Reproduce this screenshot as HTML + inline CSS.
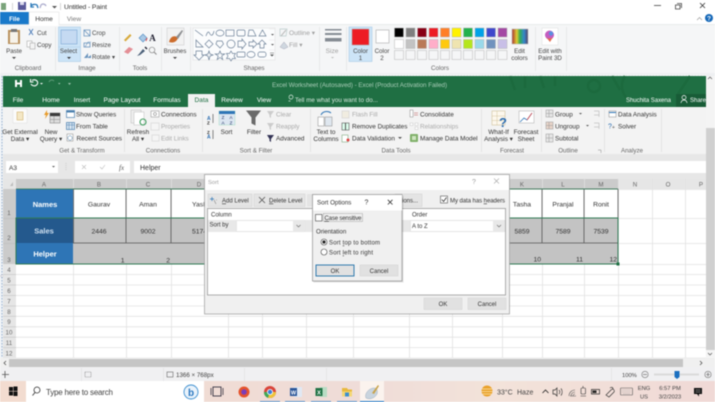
<!DOCTYPE html>
<html><head><meta charset="utf-8"><style>
html,body{margin:0;padding:0;background:#fff;width:715px;height:402px;overflow:hidden}
svg{display:block;position:absolute;left:0;top:0;filter:blur(.4px)}
text{font-family:"Liberation Sans",sans-serif;font-size:6.6px;fill:#333;white-space:pre}
.m{text-anchor:middle}.e{text-anchor:end}.g{fill:#a0a0a0}.l{fill:#777}.w{fill:#fff}.h{font-size:6.2px;fill:#666}
.x{fill:#444;font-size:6.2px}.d{font-size:6.4px;fill:#333}.c{font-size:6.8px;fill:#333}.u{text-decoration:underline}
.t{font-size:6.6px;fill:#fff}
</style></head><body>
<svg width="715" height="402" viewBox="0 0 715 402" xmlns="http://www.w3.org/2000/svg">
<rect width="715" height="402" fill="#fff"/>
<!-- Paint title -->
<rect x="1" y="3" width="5" height="7" fill="#7aa37a"/><rect x="18" y="2" width="8" height="8" fill="#5a5a9a"/><rect x="20" y="2" width="4" height="3" fill="#dde"/>
<path d="M31 6a4 3 0 0 1 6-1l1 3M31 3v4h3" fill="none" stroke="#2a78b8" stroke-width="1.3"/><path d="M46 6a3 3 0 0 0-5-1l-1 3" fill="none" stroke="#aac" stroke-width="1.2"/><path d="M52 6h5l-2.500 2.500z" fill="#555"/>
<path d="M12.500 3v7M60.500 3v7" stroke="#bbb" stroke-width=".6"/>
<text x="64" y="9" textLength="43" style="font-size:6.800px">Untitled - Paint</text>
<path d="M654 5.500h7" stroke="#444" stroke-width=".8"/><path d="M677 3.500h4.500v4.500M675.500 5h4.500v4h-4.500z" fill="none" stroke="#444" stroke-width=".8"/><path d="M700 3l5 5M705 3l-5 5" stroke="#333" stroke-width=".8"/>
<rect x="0" y="12" width="29" height="13" fill="#1979ca"/><text x="14.500" y="21" class="m w" style="font-weight:bold;font-size:6.200px">File</text>
<text x="44" y="21" class="m">Home</text><text x="74" y="21" class="m l">View</text>
<path d="M29 24.500V12h30v12.500" fill="none" stroke="#dcdcdc" stroke-width=".5"/>
<rect x="0" y="24.500" width="715" height="49" fill="#f5f6f7"/><rect x="29.500" y="22" width="29" height="4" fill="#fff"/>
<rect x="0" y="73" width="715" height="3" fill="#eef0f2"/><path d="M0 24.500h29M59 24.500h656" stroke="#dadbdc" stroke-width=".5"/>
<path d="M55.500 27v44M119.500 27v44M161.500 27v44M190.500 27v44M319.500 27v44M346.500 27v44M535.500 27v44M566.500 27v44" stroke="#dfe0e1" stroke-width=".6"/>
<path d="M697 20l2.500-2.500 2.500 2.500" fill="none" stroke="#999" stroke-width=".7"/><circle cx="709" cy="18" r="4" fill="#1668b8"/><text x="709" y="20.500" class="m w" style="font-size:6.500px;font-weight:bold">?</text>
<!-- clipboard -->
<rect x="8" y="30" width="12" height="14" fill="#b9925e"/><rect x="10" y="32" width="8" height="11" fill="#f6f2ea"/><rect x="11" y="29" width="6" height="3" fill="#777"/>
<text x="14" y="53" class="m x">Paste</text><path d="M12 57h4l-2 2z" fill="#444"/>
<path d="M29 29l4 6M33 29l-4 6" stroke="#4a7ab8" stroke-width=".9"/><text x="37" y="35" class="x">Cut</text>
<rect x="27" y="41" width="5" height="6" fill="#fff" stroke="#999" stroke-width=".5"/><rect x="30" y="43" width="5" height="6" fill="#f4f4f4" stroke="#999" stroke-width=".5"/><text x="37" y="47" class="x">Copy</text>
<text x="28" y="70" class="m h">Clipboard</text>
<!-- image -->
<rect x="58.500" y="27" width="22" height="34.500" fill="#cde4f7" stroke="#a9cbe6" stroke-width=".6"/><rect x="61" y="30" width="16" height="14" fill="#c5daf2" stroke="#7aa5d2" stroke-width=".6"/><path d="M58.500 47h22" stroke="#a9cbe6" stroke-width=".5"/>
<text x="68.500" y="53" class="m x">Select</text><path d="M67 57h4l-2 2z" fill="#333"/>
<path d="M84 30h6v6h-6zM84 30l6 6" fill="none" stroke="#6a94bd" stroke-width=".8"/><text x="92" y="35" class="x">Crop</text>
<rect x="84" y="43" width="6" height="4" fill="none" stroke="#6a94bd" stroke-width=".8"/><path d="M85 47l3-5h3" fill="none" stroke="#6a94bd" stroke-width=".6"/><text x="92" y="47" class="x">Resize</text>
<path d="M84 58l4-5v5zM87 58h4v-3z" fill="#6a94bd"/><text x="92" y="59" class="x">Rotate ▾</text>
<text x="87" y="70" class="m h">Image</text>
<!-- tools -->
<path d="M124 40l6-6 1.500 1.500-6 6z" fill="#d7a93a"/><path d="M139 38l4-4 4 4-4 4z" fill="#a9c9e6" stroke="#4b88c0" stroke-width=".6"/><path d="M147 38l-1 3" stroke="#d44" stroke-width="1"/><text x="152.500" y="41" class="m" style="font-size:9px;font-family:'Liberation Serif',serif;font-weight:bold;fill:#223">A</text>
<path d="M124 52l5-5 4 2-5 5z" fill="#e48f96"/><path d="M137 56l2-2 4-5 2 2-5 4z" fill="#4a5f78"/><path d="M145 47l2 2" stroke="#223" stroke-width="1.400"/><circle cx="152" cy="50" r="2.800" fill="none" stroke="#888" stroke-width=".7"/><path d="M154 52l2.500 2.500" stroke="#888"/>
<text x="140" y="70" class="m h">Tools</text>
<!-- brushes -->
<rect x="167" y="28" width="17" height="17" fill="#f2f2f2" stroke="#c7c7c7" stroke-width=".5"/><path d="M169 42c2-8 8-6 9-4-2 5-6 5-9 4z" fill="#cc6c2c"/><path d="M176 37l6-7 1 1-5 8z" fill="#8d8f92"/>
<text x="175" y="53" class="m x">Brushes</text><path d="M173 57h4l-2 2z" fill="#444"/>
<!-- shapes -->
<rect x="193" y="28" width="82" height="32" fill="#fbfcfd" stroke="#dcdcdc" stroke-width=".5"/>
<g fill="none" stroke="#6d8198" stroke-width=".7">
<path d="M195 30l8 6M206 36c2-6 3-4 4-2s3 2 4-3"/><ellipse cx="220" cy="33" rx="4" ry="3"/><rect x="226" y="30" width="8" height="6"/><rect x="237" y="30" width="8" height="6" rx="1.500"/><path d="M248 36l1-6h4l3 6zM259 36l3.500-6 3.500 6z"/>
<path d="M196 47v-7l7 7zM205 44l4-4 4 4-4 4zM216 44l1-3h5l1.500 3-3.500 4zM227 44a4 4 0 1 0 8 0a4 4 0 1 0-8 0zM238 41h4v-2l4 5-4 5v-2h-4zM257 44l-4-4v2h-4v4h4v2zM258 44l4-4 4 4h-2v4h-4v-4z"/>
<path d="M196 51h6v4h2l-5 5-5-5h2zM209 51l1 3 3 1-3 1-1 4-1-4-3-1 3-1zM220 51l1.200 3h3.500l-3 2 1 3.500-2.700-2-2.800 2 1-3.500-3-2h3.500zM231 51l1.500 2.500h3l-1.500 2.500 1.500 2.500h-3l-1.500 2.500-1.500-2.500h-3l1.500-2.500-1.500-2.500h3z"/>
<rect x="237" y="52" width="8" height="5" rx="1"/><ellipse cx="251" cy="54.500" rx="4" ry="3"/><rect x="258" y="52" width="8" height="5" rx="2"/></g>
<path d="M269 29h6M269 40h6M269 50h6" stroke="#e5e5e5" stroke-width=".5"/><path d="M271 34h3l-1.500 1.500zM271 44h3l-1.500 1.500zM270 54.500h4l-2 2z" fill="#555"/><path d="M270 53h4" stroke="#555" stroke-width=".5"/>
<path d="M280 29h7l-1 7h-6z" fill="none" stroke="#bcc" stroke-width=".7"/><path d="M281 36l5-6" stroke="#bbb"/><text x="289" y="35" class="g">Outline ▾</text>
<path d="M280 47l4-5 4 5-4 2z" fill="#cfd7df" stroke="#aab" stroke-width=".5"/><text x="289" y="47" class="g">Fill ▾</text>
<text x="254" y="70" class="m h">Shapes</text>
<!-- size -->
<rect x="325" y="29" width="16.500" height="1.500" fill="#858b93"/><rect x="325" y="33" width="16.500" height="2" fill="#858b93"/><rect x="325" y="38" width="16.500" height="3.500" fill="#858b93"/>
<text x="332" y="53" class="m g">Size</text><path d="M331 57h3l-1.500 1.500z" fill="#bbb"/>
<!-- colors -->
<rect x="349" y="27" width="23" height="34.500" fill="#cde4f7" stroke="#a9cbe6" stroke-width=".6"/><rect x="352" y="29" width="17" height="16" fill="#ed1c24" stroke="#aaa" stroke-width=".5"/>
<text x="360.500" y="53" class="m x">Color</text><text x="360.500" y="60" class="m x">1</text>
<rect x="376" y="30" width="13" height="13" fill="#fff" stroke="#aaa" stroke-width=".6"/><text x="382" y="53" class="m x">Color</text><text x="382" y="60" class="m x">2</text>
<g stroke="#b6b6b6" stroke-width=".5">
<rect x="394.500" y="28" width="9" height="9" fill="#000"/><rect x="406" y="28" width="9" height="9" fill="#7f7f7f"/><rect x="417.500" y="28" width="9" height="9" fill="#880015"/><rect x="429" y="28" width="9" height="9" fill="#ed1c24"/><rect x="440.500" y="28" width="9" height="9" fill="#ff7f27"/><rect x="452" y="28" width="9" height="9" fill="#fff200"/><rect x="463.500" y="28" width="9" height="9" fill="#22b14c"/><rect x="475" y="28" width="9" height="9" fill="#00a2e8"/><rect x="486.500" y="28" width="9" height="9" fill="#3f48cc"/><rect x="498" y="28" width="9" height="9" fill="#a349a4"/>
<rect x="394.500" y="39.500" width="9" height="9" fill="#fff"/><rect x="406" y="39.500" width="9" height="9" fill="#c3c3c3"/><rect x="417.500" y="39.500" width="9" height="9" fill="#b97a57"/><rect x="429" y="39.500" width="9" height="9" fill="#ffaec9"/><rect x="440.500" y="39.500" width="9" height="9" fill="#ffc90e"/><rect x="452" y="39.500" width="9" height="9" fill="#efe4b0"/><rect x="463.500" y="39.500" width="9" height="9" fill="#b5e61d"/><rect x="475" y="39.500" width="9" height="9" fill="#99d9ea"/><rect x="486.500" y="39.500" width="9" height="9" fill="#7092be"/><rect x="498" y="39.500" width="9" height="9" fill="#c8bfe7"/>
<g fill="#f5f6f7"><rect x="394.500" y="50.500" width="9" height="9"/><rect x="406" y="50.500" width="9" height="9"/><rect x="417.500" y="50.500" width="9" height="9"/><rect x="429" y="50.500" width="9" height="9"/><rect x="440.500" y="50.500" width="9" height="9"/><rect x="452" y="50.500" width="9" height="9"/><rect x="463.500" y="50.500" width="9" height="9"/><rect x="475" y="50.500" width="9" height="9"/><rect x="486.500" y="50.500" width="9" height="9"/><rect x="498" y="50.500" width="9" height="9"/></g></g>
<defs><linearGradient id="rb" x1="0" x2="1" y1="0" y2="0"><stop offset="0" stop-color="#a33"/><stop offset=".3" stop-color="#dc3"/><stop offset=".5" stop-color="#3a5"/><stop offset=".75" stop-color="#38c"/><stop offset="1" stop-color="#546"/></linearGradient></defs>
<rect x="512" y="29" width="16" height="15" fill="url(#rb)" stroke="#bbb" stroke-width=".6"/>
<text x="519.500" y="53" class="m x">Edit</text><text x="519.500" y="60" class="m x">colors</text>
<text x="440" y="70" class="m h">Colors</text>
<rect x="542" y="28" width="16" height="17" fill="#fff" stroke="#ddd" stroke-width=".5"/><circle cx="549.500" cy="35" r="4.500" fill="#c45cc0"/><path d="M546 37c2 2 5 2 7 0l-3 5z" fill="#e36a4e"/><circle cx="551" cy="33.500" r="2.200" fill="#5a8ee0"/>
<text x="550" y="53" class="m x">Edit with</text><text x="550" y="60" class="m x">Paint 3D</text>
<!-- canvas bg -->
<rect x="0" y="76" width="3" height="291" fill="#edf1f6"/><path d="M2 76v282" stroke="#7a9bc0" stroke-width=".7" stroke-dasharray="1.500 1.500"/>
<circle cx="2" cy="276" r="1.200" fill="#fff" stroke="#889" stroke-width=".4"/>
<!-- Excel title -->
<rect x="3" y="76" width="703" height="31" fill="#1f6f43"/>
<path d="M3 75.500h703" stroke="#fff" stroke-width="1" stroke-dasharray="1.500 1.500"/>
<g fill="none" stroke="#1c6a3e" stroke-width="2.500"><circle cx="594" cy="86" r="6"/><path d="M510 76l5 14M525 76v12M540 76l4 12M555 76v10M612 76l8 14M625 76a18 18 0 0 0 30 20M690 76l-12 18"/></g>
<rect x="15" y="80" width="7" height="7" fill="#fff"/><rect x="17" y="80" width="3" height="2.500" fill="#1f6f43"/><rect x="17" y="84.500" width="3" height="2.500" fill="#1f6f43"/>
<path d="M31 84a3.500 3 0 1 0 1-3.500M30.500 79v3h3" fill="none" stroke="#fff" stroke-width="1.100"/><path d="M40 83h3l-1.500 1.500z" fill="#fff"/><path d="M49 82a3 3 0 0 1 5-1" fill="none" stroke="#5d9b78"/><path d="M58 83h2.500l-1.200 1.500zM68 83h3l-1.500 2z" fill="#9dc5ae"/>
<text x="272" y="87" textLength="175" style="font-size:6.200px;fill:#a9cdb8">Excel Worksheet (Autosaved) - Excel (Product Activation Failed)</text>
<rect x="188" y="94" width="27" height="13" fill="#f2f2f2"/>
<text x="18" y="102" class="m t">File</text><text x="51" y="102" class="m t">Home</text><text x="82" y="102" class="m t">Insert</text><text x="122" y="102" class="m t">Page Layout</text><text x="167" y="102" class="m t">Formulas</text><text x="201.500" y="102" class="m" style="font-size:6.600px;fill:#1f6f43">Data</text><text x="232" y="102" class="m t">Review</text><text x="264" y="102" class="m t">View</text>
<path d="M289 97a2 2 0 1 1 0 .1M288.500 101h2" fill="none" stroke="#d8e8de" stroke-width=".7"/><text x="295" y="102" textLength="83" style="font-size:6.200px;fill:#d8e8de">Tell me what you want to do...</text>
<text x="626" y="102" textLength="45" class="w" style="font-size:6px">Shuchita Saxena</text>
<rect x="676" y="94" width="30" height="13" fill="#185c37"/><circle cx="684" cy="97.500" r="2" fill="none" stroke="#fff" stroke-width=".7"/><path d="M681 103a3 3 0 0 1 6 0" fill="none" stroke="#fff" stroke-width=".7"/><text x="690" y="102" class="w" style="font-size:6px">Share</text>
<!-- Excel ribbon -->
<rect x="3" y="107" width="703" height="48" fill="#f3f3f3"/>
<rect x="3" y="154" width="703" height="25" fill="#e7e7e7"/>
<path d="M124.500 109v43M202.500 109v43M310.500 109v43M481.500 109v43M541.500 109v43M604.500 109v43M661.500 109v43" stroke="#dcdcdc" stroke-width=".7"/>
<rect x="13" y="109" width="14" height="14" fill="#fbfbfb" stroke="#ddd" stroke-width=".5"/><rect x="17" y="112" width="6" height="8" fill="#f4e7c5" stroke="#cba95c" stroke-width=".5"/>
<text x="20" y="134" class="m d">Get External</text><text x="20" y="141" class="m d">Data ▾</text>
<path d="M47 110l-3 5h2l-1 4 4-6h-2z" fill="#e79b2a"/><rect x="50" y="113" width="10" height="10" fill="#ddd" stroke="#777" stroke-width=".5"/><path d="M50 116h10M50 119.500h10M54 113v10" stroke="#888" stroke-width=".5"/><rect x="50" y="113" width="10" height="3" fill="#3b3b3b"/>
<text x="51" y="134" class="m d">New</text><text x="51" y="141" class="m d">Query ▾</text>
<rect x="66.500" y="110.500" width="8" height="7" fill="#fff" stroke="#4a7fae" stroke-width=".7"/><rect x="66.500" y="110.500" width="8" height="2" fill="#4a7fae"/><text x="76" y="116.500" class="d">Show Queries</text>
<rect x="66.500" y="122.500" width="8" height="7" fill="#dbe7f2" stroke="#4a7fae" stroke-width=".7"/><path d="M66.500 125h8M69 122.500v7M72 122.500v7" stroke="#4a7fae" stroke-width=".5"/><text x="76" y="128.500" class="d">From Table</text>
<rect x="67" y="134" width="6" height="7" fill="#fff" stroke="#888" stroke-width=".5"/><circle cx="70" cy="138" r="2.200" fill="#fff" stroke="#4a7fae" stroke-width=".5"/><text x="76.500" y="140.500" class="d">Recent Sources</text>
<text x="82" y="152.500" class="m h">Get &amp; Transform</text>
<rect x="131" y="110" width="10" height="13" fill="#eee" stroke="#bbb" stroke-width=".5"/><rect x="134" y="112" width="10" height="13" fill="#fff" stroke="#bbb" stroke-width=".5"/><circle cx="143" cy="122" r="3" fill="none" stroke="#3d9c5c" stroke-width="1.100"/>
<text x="138" y="134" class="m d">Refresh</text><text x="138" y="141" class="m d">All ▾</text>
<rect x="151" y="111" width="8" height="6" fill="#fff" stroke="#888" stroke-width=".5"/><circle cx="155" cy="114" r="1.500" fill="none" stroke="#666" stroke-width=".5"/><text x="161" y="116.500" class="d">Connections</text>
<rect x="151" y="123" width="8" height="7" fill="#f5f5f5" stroke="#ccc" stroke-width=".5"/><text x="161" y="128.500" class="d" style="fill:#aaa">Properties</text>
<rect x="152" y="135" width="7" height="6" fill="#f5f5f5" stroke="#ccc" stroke-width=".5"/><text x="161" y="140.500" class="d" style="fill:#aaa">Edit Links</text>
<text x="163" y="152.500" class="m h">Connections</text>
<text x="207" y="120" style="font-size:5px;fill:#2b6cb0;font-weight:bold">A</text><text x="207" y="124.500" style="font-size:4.500px;fill:#333;font-weight:bold">Z</text><path d="M213 114v9" stroke="#555" stroke-width=".7"/>
<text x="207" y="134" style="font-size:4.500px;fill:#333;font-weight:bold">Z</text><text x="207" y="138.500" style="font-size:5px;fill:#2b6cb0;font-weight:bold">A</text><path d="M213 130v9" stroke="#555" stroke-width=".7"/>
<rect x="219" y="111" width="16" height="14" fill="#dce6f1" stroke="#9db" stroke-width=".4"/><rect x="219" y="111" width="16" height="3" fill="#2e75b6"/><text x="223" y="119" class="m" style="font-size:4.500px;fill:#236">Z</text><text x="231" y="119" class="m" style="font-size:4.500px;fill:#236">A</text><text x="223" y="124.500" class="m" style="font-size:4.500px;fill:#236">A</text><text x="231" y="124.500" class="m" style="font-size:4.500px;fill:#236">Z</text>
<text x="226.500" y="134" class="m d">Sort</text>
<path d="M246 110.500h15l-5.500 7v8l-4-2v-6z" fill="#6a6a6a"/><text x="254" y="134" class="m d">Filter</text>
<path d="M267 111h7l-3 4v3l-1.500-1v-2z" fill="#ccc"/><text x="276" y="116.500" class="d" style="fill:#aaa">Clear</text>
<path d="M267 123h7l-3 4v3l-1.500-1v-2z" fill="#ccc"/><text x="276" y="128.500" class="d" style="fill:#aaa">Reapply</text>
<path d="M267 135h7l-3 4v3l-1.500-1v-2z" fill="#335"/><text x="276" y="140.500" class="d">Advanced</text>
<text x="256" y="152.500" class="m h">Sort &amp; Filter</text>
<rect x="318" y="117" width="6" height="9" fill="#fff" stroke="#888" stroke-width=".5"/><rect x="325" y="117" width="7" height="9" fill="#dfe7ef" stroke="#888" stroke-width=".5"/><path d="M321 115a6 5 0 0 1 10-2" fill="none" stroke="#2e75b6" stroke-width="1"/>
<text x="326" y="134" class="m d">Text to</text><text x="326" y="141" class="m d">Columns</text>
<rect x="342" y="111" width="7" height="7" fill="#f1ece0" stroke="#ccc" stroke-width=".5"/><text x="352" y="116.500" class="d" style="fill:#aaa">Flash Fill</text>
<rect x="342" y="123" width="7" height="7" fill="#dfe" stroke="#555" stroke-width=".6"/><path d="M345.500 123v7" stroke="#555"/><text x="352" y="128.500" class="d">Remove Duplicates</text>
<rect x="342" y="135" width="6" height="7" fill="#fff" stroke="#6a9a6a" stroke-width=".5"/><circle cx="348" cy="140" r="1.500" fill="#d44"/><text x="352" y="140.500" class="d">Data Validation</text><path d="M398 137h4l-2 2z" fill="#555"/>
<rect x="410" y="110" width="3" height="7" fill="#fff" stroke="#888" stroke-width=".5"/><path d="M414 113h4M414 115h4" stroke="#b55" stroke-width=".6"/><text x="420" y="116.500" class="d">Consolidate</text>
<rect x="410" y="123" width="3" height="2.500" fill="#fff" stroke="#bbb" stroke-width=".4"/><rect x="415" y="123" width="3" height="2.500" fill="#fff" stroke="#bbb" stroke-width=".4"/><rect x="415" y="127" width="3" height="2.500" fill="#fff" stroke="#bbb" stroke-width=".4"/><text x="420" y="128.500" class="d" style="fill:#aaa">Relationships</text>
<rect x="410" y="134" width="8" height="8" rx="1" fill="#7fb069"/><rect x="412" y="136" width="4" height="4" fill="#cfe4c1"/><text x="420" y="140.500" class="d">Manage Data Model</text>
<text x="396" y="152.500" class="m h">Data Tools</text>
<rect x="492" y="111" width="13" height="14" fill="#fdf8ee" stroke="#c9b98c" stroke-width=".5"/><path d="M492 116h13M492 120.500h13M497 111v14" stroke="#c9b98c" stroke-width=".4"/><text x="503" y="127" class="m" style="font-size:13px;font-weight:bold;fill:#2b6cb0">?</text>
<text x="498.500" y="134" class="m d">What-If</text><text x="498.500" y="141" class="m d">Analysis ▾</text>
<rect x="519" y="111" width="15" height="12" fill="#fff" stroke="#aaa" stroke-width=".5"/><path d="M520 122l4-4 3 2 5-7" fill="none" stroke="#2e75b6" stroke-width=".8"/><path d="M527 120l5-7" fill="none" stroke="#d44" stroke-width=".7"/>
<text x="526" y="134" class="m d">Forecast</text><text x="526" y="141" class="m d">Sheet</text>
<text x="512" y="152.500" class="m h">Forecast</text>
<rect x="546" y="110" width="7" height="7" fill="#e6e6e6" stroke="#999" stroke-width=".5"/><path d="M549 110v7M546 113.500h7" stroke="#999" stroke-width=".5"/><text x="555" y="116.500" class="d">Group</text><path d="M579 113h3l-1.500 1.500z" fill="#555"/>
<rect x="546" y="122" width="7" height="7" fill="#e7d3c8" stroke="#999" stroke-width=".5"/><path d="M549 122v7M546 125.500h7" stroke="#999" stroke-width=".5"/><text x="555" y="128.500" class="d">Ungroup</text><path d="M586 125h3l-1.500 1.500z" fill="#555"/>
<rect x="546" y="134" width="7" height="8" fill="#e6e6e6" stroke="#999" stroke-width=".5"/><path d="M549 134v8M546 138h7" stroke="#999" stroke-width=".5"/><text x="555" y="140.500" class="d">Subtotal</text>
<path d="M594 111h5M599 111v6M594 115h5" fill="none" stroke="#aaa" stroke-width=".5"/><path d="M594 123h5M599 123v6M594 127h5" fill="none" stroke="#aaa" stroke-width=".5"/>
<text x="568" y="152.500" class="m h">Outline</text><path d="M598 150h3v3" fill="none" stroke="#888" stroke-width=".5"/>
<rect x="609" y="111" width="7" height="6" fill="#fff" stroke="#888" stroke-width=".5"/><path d="M609 112.500h7" stroke="#2e75b6" stroke-width="1"/><text x="618" y="116.500" class="d">Data Analysis</text>
<text x="608" y="128.500" style="font-size:7px;fill:#2b6cb0">?</text><text x="612" y="129" style="font-size:5px;fill:#555">+</text><text x="618" y="128.500" class="d">Solver</text>
<text x="632" y="152.500" class="m h">Analyze</text>
<!-- formula bar -->
<rect x="6" y="161" width="52" height="12" fill="#fff"/><text x="9" y="170" class="d" style="font-size:6.500px">A3</text><path d="M52 166h3l-1.500 1.500z" fill="#555"/>
<path d="M66 163v8" stroke="#ccc" stroke-width="1" stroke-dasharray="1 1"/>
<rect x="75" y="161" width="55" height="12" fill="#fff"/><path d="M82 165l4 4M86 165l-4 4" stroke="#bbb" stroke-width=".6"/><path d="M100 167l2 2 3-4" fill="none" stroke="#bbb" stroke-width=".6"/><text x="119" y="170" style="font-family:'Liberation Serif',serif;font-style:italic;font-size:7px;fill:#555">fx</text>
<rect x="134" y="161" width="572" height="12" fill="#fff"/><text x="140" y="170" style="font-size:7px;fill:#333">Helper</text>
<!-- sheet -->
<rect x="3" y="179" width="703" height="179" fill="#fff"/>
<rect x="3" y="179" width="13" height="179" fill="#e6e6e6"/><rect x="3" y="179" width="703" height="10" fill="#e6e6e6"/>
<path d="M13 186v-4l-3 4z" fill="#bbb"/>
<rect x="16" y="179" width="602" height="10" fill="#cbcbcb"/><rect x="3" y="189" width="13" height="75" fill="#cbcbcb"/>
<path d="M73.500 179v179M126.500 179v179M171.500 179v179M228.500 179v179M262.500 179v179M306.500 179v179M353.500 179v179M409.500 179v179M452.500 179v179M502.500 179v179M542.500 179v179M584.500 179v179M618.500 179v179M652.500 179v179M685.500 179v179" stroke="#e2e2e2" stroke-width=".8"/>
<path d="M16 274.500h690M16 285h690M16 295.500h690M16 306h690M16 316.300h690M16 326.800h690M16 337.200h690M16 347.600h690M16 358h690M618 218.500h88M618 243.500h88M618 189.500h88M618 264.500h88" stroke="#e2e2e2" stroke-width=".8"/>
<path d="M3 274.500h13M3 285h13M3 295.500h13M3 306h13M3 316.300h13M3 326.800h13M3 337.200h13M3 347.600h13M3 218.500h13M3 243.500h13" stroke="#bbb" stroke-width=".5"/>
<!-- table -->
<rect x="16" y="189" width="57" height="29" fill="#2e75b6"/><rect x="16" y="218" width="57" height="25" fill="#24598d"/><rect x="16" y="243" width="57" height="21" fill="#2e75b6"/>
<rect x="73" y="218" width="545" height="46" fill="#c3c3c3"/>
<g stroke="#555" stroke-width=".8"><path d="M73 189h545M73 218h545M73 243h545"/><path d="M73.500 189v54M126 189v54M171 189v54M228 189v54M262 189v54M306 189v54M353 189v54M409 189v54M452 189v54M502 189v54M542 189v54M584 189v54M618 189v54"/></g>
<rect x="16" y="218" width="602" height="46" fill="none" stroke="#2f7a55" stroke-width="1"/><path d="M16 189h602" stroke="#2f7a55" stroke-width=".8"/><rect x="616.500" y="262.500" width="3" height="3" fill="#1f6f43"/>
<text x="45" y="207" class="m w" style="font-size:7.500px;font-weight:bold">Names</text><text x="44" y="233.500" class="m" style="font-size:7.500px;font-weight:bold;fill:#cfe0f0">Sales</text><text x="45" y="256.500" class="m w" style="font-size:7.500px;font-weight:bold">Helper</text>
<text x="99" y="206.500" class="m c">Gaurav</text><text x="148" y="206.500" class="m c">Aman</text><text x="192" y="206.500" class="c">Yash</text>
<text x="99" y="233.500" class="m c">2446</text><text x="148" y="233.500" class="m c">9002</text><text x="192" y="233.500" class="c">5174</text>
<text x="124.500" y="262.500" class="e c">1</text><text x="170" y="262.500" class="e c">2</text>
<text x="522" y="206.500" class="m c">Tasha</text><text x="563" y="206.500" class="m c">Pranjal</text><text x="601" y="206.500" class="m c">Ronit</text>
<text x="522" y="233.500" class="m c">5859</text><text x="563" y="233.500" class="m c">7589</text><text x="601" y="233.500" class="m c">7539</text>
<text x="541" y="261.500" class="e c">10</text><text x="583" y="261.500" class="e c">11</text><text x="617" y="261.500" class="e c">12</text>
<!-- headers -->
<text x="44" y="186.500" class="m h">A</text><text x="99" y="186.500" class="m h">B</text><text x="148" y="186.500" class="m h">C</text><text x="199" y="186.500" class="m h">D</text><text x="522" y="186.500" class="m h">K</text><text x="563" y="186.500" class="m h">L</text><text x="601" y="186.500" class="m h">M</text><text x="635" y="186.500" class="m h">N</text><text x="668" y="186.500" class="m h">O</text><text x="701" y="186.500" class="m h">P</text>
<text x="9" y="215" class="m h">1</text><text x="9" y="240" class="m h">2</text><text x="9" y="262" class="m h">3</text><text x="9" y="272" class="m h">4</text><text x="9" y="282.500" class="m h">5</text><text x="9" y="293" class="m h">6</text><text x="9" y="303.500" class="m h">7</text><text x="9" y="314" class="m h">8</text><text x="9" y="324" class="m h">9</text><text x="9" y="334.500" class="m h">10</text><text x="9" y="345" class="m h">11</text><text x="9" y="355.500" class="m h">12</text>
<!-- scrollbars -->
<rect x="706" y="76" width="9" height="291" fill="#f4f4f4"/><rect x="706" y="128" width="9" height="222" fill="#d0d0d0"/>
<path d="M708 79l2-2 2 2M708 353l2 2 2-2" fill="none" stroke="#555" stroke-width=".7"/>
<rect x="0" y="358" width="715" height="9" fill="#f0f0f0"/><rect x="9" y="359" width="674" height="8" fill="#c5c5c5"/>
<path d="M6 361l-2 2 2 2M700 361l2 2-2 2" fill="none" stroke="#444" stroke-width=".7"/>
<!-- status -->
<rect x="0" y="367" width="715" height="14" fill="#f0f0f2"/>
<path d="M81.500 368v13M163.500 368v13M244.500 368v13M326.500 368v13M611.500 368v13" stroke="#dedede" stroke-width=".6"/>
<path d="M5 371v7M2 374.500h7" stroke="#555" stroke-width=".8"/>
<rect x="85" y="372" width="6" height="5" fill="none" stroke="#777" stroke-width=".6" stroke-dasharray="1 .6"/><rect x="167" y="372" width="6" height="5" fill="none" stroke="#666" stroke-width=".6"/>
<text x="176" y="377" class="x">1366 × 768px</text>
<text x="622" y="377" class="x" style="font-size:5.800px">100%</text>
<circle cx="645" cy="374.500" r="3.200" fill="none" stroke="#777" stroke-width=".6"/><path d="M643 374.500h4" stroke="#555" stroke-width=".6"/>
<rect x="654" y="373.500" width="45" height="2" fill="#dadada"/><path d="M674.500 371h5v6l-2.500 2-2.500-2z" fill="#1a6fc0"/>
<circle cx="708" cy="374.500" r="3.200" fill="none" stroke="#777" stroke-width=".6"/><path d="M706 374.500h4M708 372.500v4" stroke="#555" stroke-width=".6"/>
<!-- taskbar -->
<defs><linearGradient id="tb" x1="0" x2="1" y1="0" y2="0"><stop offset="0" stop-color="#f3dcd0"/><stop offset=".5" stop-color="#efdcd8"/><stop offset=".7" stop-color="#f3e3da"/><stop offset="1" stop-color="#f0d9d6"/></linearGradient></defs>
<rect x="0" y="381" width="715" height="21" fill="url(#tb)"/>
<g fill="#111"><rect x="9" y="387" width="4" height="4"/><rect x="13.500" y="386.500" width="4" height="4.500"/><rect x="9" y="391.500" width="4" height="4"/><rect x="13.500" y="391.500" width="4" height="4.500"/></g>
<rect x="26" y="381" width="178" height="21" fill="#fff"/>
<circle cx="37" cy="390" r="3" fill="none" stroke="#333" stroke-width=".8"/><path d="M35 392.500l-2.500 3" stroke="#333" stroke-width=".9"/>
<text x="46" y="395" textLength="67" style="font-size:8px;fill:#444">Type here to search</text>
<circle cx="191" cy="392" r="7" fill="#eaf3fb" stroke="#3e8fd0" stroke-width=".9"/><text x="191" y="396" class="m" style="font-size:10px;font-weight:bold;fill:#2b78c0">b</text>
<rect x="213" y="387" width="8" height="9" fill="none" stroke="#223" stroke-width=".8"/><path d="M211 388v7M223 388v7" stroke="#223" stroke-width=".7"/>
<circle cx="244" cy="392" r="5.500" fill="#e5532c"/><circle cx="244" cy="392" r="2.800" fill="#7b3db8"/>
<circle cx="270" cy="392" r="6" fill="#d9443a"/><path d="M270 392l-6 0a6 6 0 0 0 4 6z" fill="#3fa856"/><path d="M270 392l6 0a6 6 0 0 1-6 6l-2-.3z" fill="#eec43a"/><circle cx="270" cy="392" r="2.600" fill="#3a7fd8" stroke="#fff" stroke-width=".8"/>
<rect x="294" y="387" width="8" height="10" fill="#e0e8f4"/><rect x="290" y="388" width="7" height="8" fill="#2b579a"/><text x="293.500" y="394.500" class="m w" style="font-size:5.500px;font-weight:bold">W</text>
<rect x="320" y="387" width="7" height="10" fill="#b8dcc4"/><rect x="315.500" y="388" width="7" height="8" fill="#217346"/><text x="319" y="394.500" class="m w" style="font-size:5.500px;font-weight:bold">X</text>
<path d="M342 388h5l1 1.500h4v2h-10z" fill="#e8b93d"/><rect x="342" y="391.500" width="10" height="5" fill="#f4d774"/><rect x="345" y="392.500" width="4" height="4" fill="#3c8fcf"/>
<rect x="360" y="381" width="24" height="21" fill="#fbf3ee"/><path d="M366 398c-2-4 3-10 8-10 3 0 4 3 3 6-2 4-7 6-11 4z" fill="#c9d4de" stroke="#8fa3b8" stroke-width=".4"/><path d="M372 393l6-8 1 1-5 8z" fill="#c9a34a"/>
<g fill="#1f78c8" opacity=".7"><rect x="260" y="401" width="20" height="1"/><rect x="285" y="401" width="20" height="1"/><rect x="311" y="401" width="20" height="1"/><rect x="337" y="401" width="20" height="1"/></g><rect x="360" y="401" width="24" height="1" fill="#1f78c8"/>
<circle cx="487" cy="391" r="5.500" fill="#e9a12b"/><path d="M482 389h10M481.500 391.500h11M482.500 394h9" stroke="#fbe3ad" stroke-width=".7"/>
<text x="497" y="394.500" class="x" style="font-size:7px">33°C</text><text x="517" y="394.500" class="x" style="font-size:7px">Haze</text>
<path d="M542.500 393l3-3 3 3" fill="none" stroke="#222" stroke-width=".8"/>
<path d="M553 390h2l2-2v8l-2-2h-2zM559 390a3 3 0 0 1 0 4M561 388.500a6 6 0 0 1 0 7" fill="none" stroke="#333" stroke-width=".7"/>
<path d="M569 396a6 6 0 0 1 6-6M571 396a4 4 0 0 1 4-4M573 396a2 2 0 0 1 2-2M570 396h6" fill="none" stroke="#555" stroke-width=".6"/>
<rect x="581" y="388" width="4.500" height="6" rx="1" fill="none" stroke="#333" stroke-width=".6"/><path d="M580.500 396h5.500M583 386v2" stroke="#333" stroke-width=".6"/>
<rect x="591.500" y="389.500" width="8" height="4.500" fill="none" stroke="#222" stroke-width=".7"/><rect x="592.500" y="390.500" width="4" height="2.500" fill="#222"/>
<path d="M606 395l5-5a1.500 1.500 0 0 1 3 2l-5 5zM610 388c1-1 3-1 3 1" fill="none" stroke="#333" stroke-width=".7"/>
<rect x="620.500" y="388" width="12" height="7" rx=".5" fill="none" stroke="#555" stroke-width=".6"/><path d="M622 390h9M622 392h9M623 393.800h7" stroke="#999" stroke-width=".5" stroke-dasharray="1 .5"/>
<text x="644" y="390" class="m x" style="font-size:5.800px">ENG</text><text x="644" y="398.500" class="m x" style="font-size:5.800px">US</text>
<text x="670" y="390" class="m x" style="font-size:5.800px">6:57 PM</text><text x="670" y="398.500" class="m x" style="font-size:5.800px">3/2/2023</text>
<path d="M694 388h8v6h-3v2.500l-2-2.500h-3z" fill="#111"/><path d="M695.500 390h5M695.500 392h5" stroke="#fff" stroke-width=".4"/>
<!-- Sort dialog -->
<rect x="204.500" y="174.500" width="305" height="139.500" fill="#f0f0f0" stroke="#9b9b9b" stroke-width=".7"/>
<rect x="205" y="175" width="304" height="15" fill="#fff"/>
<text x="208" y="184" class="g" style="font-size:5.800px">Sort</text><text x="474" y="184" class="m g" style="font-size:7px">?</text><path d="M494 178.500l5 5M499 178.500l-5 5" stroke="#aaa" stroke-width=".7"/>
<rect x="208" y="194" width="44" height="12.500" fill="#e4e4e4" stroke="#d0d0d0" stroke-width=".5"/><path d="M212 197v4M210 199h4" stroke="#2e75b6" stroke-width=".7"/><path d="M214 200l2 4M216 200h1" stroke="#888" stroke-width=".6"/><text x="222" y="202.500" class="d" style="font-size:6px"><tspan class="u">A</tspan>dd Level</text>
<rect x="254" y="194" width="51" height="12.500" fill="#e4e4e4" stroke="#d0d0d0" stroke-width=".5"/><path d="M259 197l6 6M265 197l-6 6" stroke="#555" stroke-width=".8"/><text x="269" y="202.500" class="d" style="font-size:6px"><tspan class="u">D</tspan>elete Level</text>
<rect x="307" y="194" width="10" height="12.500" fill="#e4e4e4"/><rect x="395" y="194" width="27" height="12.500" fill="#e4e4e4" stroke="#d0d0d0" stroke-width=".5"/><text x="402" y="202.500" class="d" style="font-size:6px">ions...</text>
<rect x="440.500" y="196" width="7" height="7" fill="#fff" stroke="#555" stroke-width=".6"/><path d="M441.800 199.500l1.800 2 2.800-4" fill="none" stroke="#333" stroke-width=".8"/><text x="450" y="202.500" class="d" textLength="55" style="font-size:6px">My data has <tspan class="u">h</tspan>eaders</text>
<rect x="207.500" y="208.500" width="298" height="86.500" fill="#fff" stroke="#8d8d8d" stroke-width=".7"/>
<text x="211" y="216.500" class="d" style="font-size:6px">Column</text><text x="412" y="216.500" class="d" style="font-size:6px">Order</text>
<rect x="208" y="220" width="297" height="12" fill="#e8e8e8"/>
<text x="209.500" y="226.500" class="d" style="font-size:6px">Sort by</text>
<rect x="236.500" y="220.500" width="68" height="11" fill="#fff" stroke="#dadada" stroke-width=".5"/><rect x="293" y="221" width="11" height="10" fill="#e8e8e8"/><path d="M296.500 225l2 2 2-2" fill="none" stroke="#666" stroke-width=".6"/>
<rect x="410.500" y="220.500" width="94" height="11" fill="#fff" stroke="#dadada" stroke-width=".5"/><rect x="493" y="221" width="11" height="10" fill="#e8e8e8"/><path d="M497 225l2 2 2-2" fill="none" stroke="#666" stroke-width=".6"/>
<text x="412" y="228" class="d" style="font-size:6px">A to Z</text>
<rect x="424" y="298" width="38" height="11.500" fill="#e1e1e1" stroke="#d2d2d2" stroke-width=".5"/><text x="443" y="305.800" class="m d" style="font-size:6px">OK</text>
<rect x="468" y="298" width="38" height="11.500" fill="#e1e1e1" stroke="#d2d2d2" stroke-width=".5"/><text x="487" y="305.800" class="m d" style="font-size:6px">Cancel</text>
<!-- Sort Options -->
<rect x="312.500" y="194.500" width="90" height="87" fill="#000" opacity=".12" transform="translate(1 1)"/>
<rect x="312.500" y="194.500" width="89.500" height="86.500" fill="#f0f0f0" stroke="#8f8f8f" stroke-width=".7"/>
<rect x="313" y="195" width="89" height="15.500" fill="#fff"/>
<text x="317" y="204.500" class="d" style="font-size:6.200px">Sort Options</text><text x="366.500" y="204.500" class="m d" style="font-size:7px">?</text><path d="M387.800 199.800l4.700 4.700M392.500 199.800l-4.700 4.700" stroke="#333" stroke-width=".8"/>
<rect x="315.500" y="214.500" width="6.500" height="6.500" fill="#fff" stroke="#444" stroke-width=".6"/>
<rect x="323.500" y="213.500" width="39" height="8" fill="none" stroke="#555" stroke-width=".5" stroke-dasharray=".8 .8"/>
<text x="324.500" y="220" class="d" textLength="37" style="font-size:6px"><tspan class="u">C</tspan>ase sensitive</text>
<text x="316" y="233.500" class="d" style="font-size:6.200px">Orientation</text>
<circle cx="324" cy="242" r="3" fill="#fff" stroke="#444" stroke-width=".6"/><circle cx="324" cy="242" r="1.600" fill="#222"/><text x="329" y="244.500" class="d" textLength="51" style="font-size:6px">Sort <tspan class="u">t</tspan>op to bottom</text>
<circle cx="324" cy="252" r="3" fill="#fff" stroke="#444" stroke-width=".6"/><text x="329" y="254.500" class="d" textLength="44" style="font-size:6px">Sort <tspan class="u">l</tspan>eft to right</text>
<rect x="316" y="265" width="38" height="11" fill="#e1e1e1" stroke="#1f6fa8" stroke-width=".9"/><text x="335" y="273" class="m d" style="font-size:6px">OK</text>
<rect x="360" y="265" width="38" height="11" fill="#e1e1e1" stroke="#d0d0d0" stroke-width=".5"/><text x="379" y="273" class="m d" style="font-size:6px">Cancel</text>
</svg>
</body></html>
